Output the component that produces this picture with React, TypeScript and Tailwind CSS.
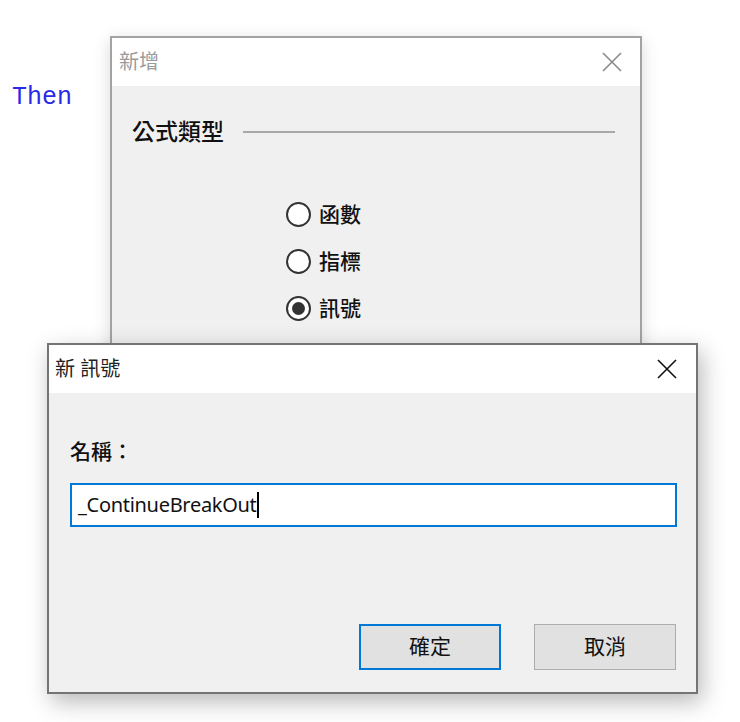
import React from "react";

const cjk = "font-[Noto_Sans,Noto_Sans_CJK_TC,sans-serif]";

function CloseIcon({ className }: { className: string }) {
  return (
    <svg viewBox="0 0 20 20" className={className} fill="none" stroke="currentColor" strokeWidth="1.6">
      <path d="M1 1 L19 19 M19 1 L1 19" />
    </svg>
  );
}

function Radio({ label, checked }: { label: string; checked?: boolean }) {
  return (
    <div className="flex items-center gap-[8px] h-[47px]">
      <span className="w-[25px] h-[25px] rounded-full border-2 border-[#333] bg-white flex items-center justify-center">
        {checked && <span className="w-[13px] h-[13px] rounded-full bg-[#333]" />}
      </span>
      <span className="text-[21px] font-medium text-[#111] leading-none">{label}</span>
    </div>
  );
}

export default function App() {
  return (
    <div className={`relative w-[740px] h-[722px] bg-white overflow-hidden ${cjk}`}>
      {/* code behind the dialogs */}
      <div className="absolute left-[12px] top-[85px] font-[Liberation_Mono,monospace] text-[25px] leading-none text-[#2a2ae8]">
        Then
      </div>

      {/* back dialog: 新增 */}
      <div className="absolute left-[110px] top-[36px] w-[532px] h-[340px] border-2 border-[#a3a3a3] bg-[#f0f0f0] shadow-[0_4px_16px_rgba(0,0,0,0.15)]">
        <div className="h-[48px] bg-white flex items-center justify-between pl-[7px] pr-[18px]">
          <span className="text-[20px] text-[#9a9a9a]">新增</span>
          <CloseIcon className="w-[20px] h-[20px] text-[#8a8a8a]" />
        </div>
        <div className="pl-[20px] pr-[25px] pt-[34px]">
          <div className="flex items-center gap-[19px]">
            <span className="text-[23px] font-medium text-[#111] leading-none">公式類型</span>
            <div className="flex-1 h-[2px] bg-[#a8a8a8]" />
          </div>
          <div className="ml-[154px] mt-[48px] flex flex-col">
            <Radio label="函數" />
            <Radio label="指標" />
            <Radio label="訊號" checked />
          </div>
        </div>
      </div>

      {/* front dialog: 新 訊號 */}
      <div className="absolute left-[47px] top-[343px] w-[651px] h-[351px] border-2 border-[#747474] bg-[#f0f0f0] shadow-[4px_8px_22px_rgba(0,0,0,0.28)] flex flex-col">
        <div className="h-[48px] bg-white flex items-center justify-between pl-[6px] pr-[19px]">
          <span className="text-[20px] text-[#222]">新 訊號</span>
          <CloseIcon className="w-[20px] h-[20px] text-[#111]" />
        </div>
        <div className="flex-1 flex flex-col pl-[21px] pr-[19px] pt-[48px]">
          <span className="text-[21px] font-medium text-[#111] leading-none">名稱：</span>
          <div className="mt-[21px] h-[44px] border-2 border-[#0078d7] bg-white flex items-center pl-[6px]">
            <span className="text-[20px] text-[#111] tracking-[-0.3px]">_ContinueBreakOut</span>
            <span className="w-[2px] h-[26px] bg-black" />
          </div>
          <div className="mt-auto mb-[22px] flex justify-end gap-[33px] pr-[1px]">
            <button className="w-[142px] h-[46px] border-2 border-[#0078d7] bg-[#e1e1e1] text-[21px] text-[#111]">
              確定
            </button>
            <button className="w-[142px] h-[46px] border border-[#adadad] bg-[#e1e1e1] text-[21px] text-[#111]">
              取消
            </button>
          </div>
        </div>
      </div>
    </div>
  );
}
